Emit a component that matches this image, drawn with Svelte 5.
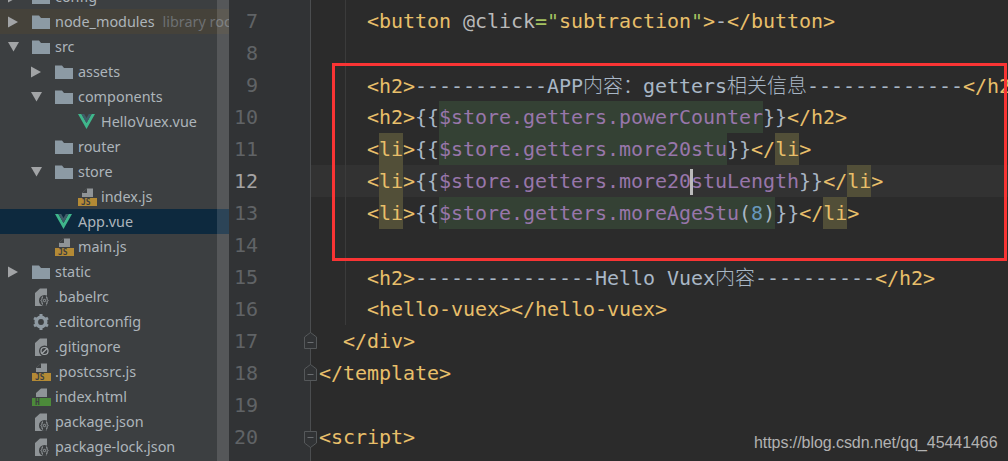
<script>
  const tree = [
    { name: 'config', d: 0, arrow: 'r', icon: 'folder' },
    { name: 'node_modules', note: 'library root', d: 0, arrow: 'r', icon: 'folder', cls: 'lib' },
    { name: 'src', d: 0, arrow: 'd', icon: 'folder' },
    { name: 'assets', d: 1, arrow: 'r', icon: 'folder' },
    { name: 'components', d: 1, arrow: 'd', icon: 'folder' },
    { name: 'HelloVuex.vue', d: 2, icon: 'vue' },
    { name: 'router', d: 1, icon: 'folder' },
    { name: 'store', d: 1, arrow: 'd', icon: 'folder' },
    { name: 'index.js', d: 2, icon: 'js' },
    { name: 'App.vue', d: 1, icon: 'vue', cls: 'sel' },
    { name: 'main.js', d: 1, icon: 'js' },
    { name: 'static', d: 0, arrow: 'r', icon: 'folder' },
    { name: '.babelrc', d: 0, icon: 'cfg' },
    { name: '.editorconfig', d: 0, icon: 'gear' },
    { name: '.gitignore', d: 0, icon: 'ign' },
    { name: '.postcssrc.js', d: 0, icon: 'js' },
    { name: 'index.html', d: 0, icon: 'html' },
    { name: 'package.json', d: 0, icon: 'cfg' },
    { name: 'package-lock.json', d: 0, icon: 'cfg' }
  ];

  const lines = [
    { n: 6, t: [] },
    { n: 7, t: [['t', '    <button '], ['a', '@click'], ['e', '="'], ['t', 'subtraction'], ['e', '"'], ['t', '>'], ['p', '-'], ['t', '</button>']] },
    { n: 8, t: [] },
    { n: 9, t: [['t', '    <h2>'], ['p', '-----------APP'], ['c', '内容：'], ['p', 'getters'], ['c', '相关信息'], ['p', '-------------'], ['t', '</h2>']] },
    { n: 10, t: [['t', '    <h2>'], ['p', '{{'], ['v g', '$store.getters.powerCounter'], ['p', '}}'], ['t', '</h2>']] },
    { n: 11, t: [['t', '    <'], ['t h', 'li'], ['t', '>'], ['p', '{{'], ['v g', '$store.getters.more20stu'], ['p', '}}'], ['t', '</'], ['t h', 'li'], ['t', '>']] },
    { n: 12, cur: true, t: [['t', '    <'], ['t h', 'li'], ['t', '>'], ['p', '{{'], ['v', '$store.getters.more20'], ['caret', ''], ['v', 'stuLength'], ['p', '}}'], ['t', '</'], ['t h', 'li'], ['t', '>']] },
    { n: 13, t: [['t', '    <'], ['t h', 'li'], ['t', '>'], ['p', '{{'], ['v g', '$store.getters.moreAgeStu'], ['p g', '('], ['n g', '8'], ['p g', ')'], ['p', '}}'], ['t', '</'], ['t h', 'li'], ['t', '>']] },
    { n: 14, t: [] },
    { n: 15, t: [['t', '    <h2>'], ['p', '---------------Hello Vuex'], ['c', '内容'], ['p', '----------'], ['t', '</h2>']] },
    { n: 16, t: [['t', '    <hello-vuex></hello-vuex>']] },
    { n: 17, fold: 'up', t: [['t', '  </div>']] },
    { n: 18, fold: 'up', t: [['t', '</template>']] },
    { n: 19, t: [] },
    { n: 20, fold: 'down', t: [['t', '<script>']] },
    { n: 21, t: [] }
  ];
</script>

<div class="app">
  <aside class="tree">
    {#each tree as r}
      <div class="row {r.cls ?? ''}">
        <span class="indent" style:width="{8 + 23 * r.d}px"></span>
        <span class="arrow">
          {#if r.arrow === 'r'}
            <svg width="11" height="12" viewBox="0 0 11 12"><path d="M0 0.5 10 6 0 11.5Z" fill="#a2a4a6" /></svg>
          {:else if r.arrow === 'd'}
            <svg width="11" height="10" viewBox="0 0 11 10"><path d="M0 0H11L5.500 9.500Z" fill="#a2a4a6" /></svg>
          {/if}
        </span>
        <span class="icon">
          {#if r.icon === 'folder'}
            <svg width="18" height="14" viewBox="0 0 18 14"><path d="M0 0.500H7L9 3H18V14H0Z" fill="#8c9aa4" /></svg>
          {:else if r.icon === 'vue'}
            <svg width="17" height="15" viewBox="0 0 17 15"><path d="M0 0H3.400L8.500 9 13.600 0H17L8.500 15Z" fill="#3fb68b" /><path d="M3.400 0H6.200L8.500 4 10.800 0H13.600L8.500 9Z" fill="#3f5c68" /></svg>
          {:else if r.icon === 'js'}
            <svg width="19" height="18" viewBox="0 0 19 18"><path d="M4 9V5L9 0.500H15V9Z" fill="#8f9497" /><path d="M4 5H9V0.500Z" fill="#3c3f41" /><rect y="10" width="19" height="8" fill="#b48a35" /><text x="3" y="17" class="badge">JS</text></svg>
          {:else if r.icon === 'html'}
            <svg width="19" height="18" viewBox="0 0 19 18"><path d="M4 9V5L9 0.500H15V9Z" fill="#8f9497" /><rect y="10" width="19" height="8" fill="#4c8a3a" /><text x="3" y="17" class="badge">H</text></svg>
          {:else if r.icon === 'cfg'}
            <svg width="18" height="18" viewBox="0 0 18 18"><path d="M3 18V5L8 0.500H15V18Z" fill="#8f9497" /><circle cx="12.500" cy="12.500" r="5.500" fill="#3c3f41" /><path d="M11 8.500C9.500 8.500 10.500 12 9 12.500 10.500 13 9.500 16.500 11 16.500M14 8.500C15.500 8.500 14.500 12 16 12.500 14.500 13 15.500 16.500 14 16.500" fill="none" stroke="#a3a8ab" /><circle cx="12.500" cy="12.500" r="1.200" fill="none" stroke="#a3a8ab" stroke-width="0.800" /></svg>
          {:else if r.icon === 'ign'}
            <svg width="18" height="18" viewBox="0 0 18 18"><path d="M3 18V5L8 0.500H15V18Z" fill="#8f9497" /><circle cx="12.500" cy="13" r="5.500" fill="#3c3f41" /><circle cx="12.500" cy="13" r="3.500" fill="none" stroke="#a3a8ab" stroke-width="1.200" /><path d="M10 15.500 15 10.500" stroke="#a3a8ab" stroke-width="1.200" /></svg>
          {:else if r.icon === 'gear'}
            <svg width="18" height="18" viewBox="0 0 18 18"><circle cx="9" cy="9" r="4.800" fill="none" stroke="#8f9aa2" stroke-width="3.400" /><path d="M9 1V17M2 5 16 13M2 13 16 5" stroke="#8f9aa2" stroke-width="3" /><circle cx="9" cy="9" r="2.900" fill="#3c3f41" /></svg>
          {/if}
        </span>
        <span class="name">{r.name}</span>
        {#if r.note}<span class="note">{r.note}</span>{/if}
      </div>
    {/each}
    <div class="scrollbar"></div>
  </aside>

  <main class="main">
    <div class="guide"></div>
    {#each lines as l, i}
      <div class="line" class:first={i === 0}>
        <div class="num" class:curnum={l.cur}>
          {l.n}
          {#if l.fold === 'up'}
            <svg class="fold up" width="13" height="17" viewBox="0 0 13 17"><path d="M0.500 5 6.500 0.500 12.500 5V16.500H0.500Z" fill="#313335" stroke="#55585a" /><path d="M3.500 10.500H9.500" stroke="#6a6d70" /></svg>
          {:else if l.fold === 'down'}
            <svg class="fold down" width="13" height="17" viewBox="0 0 13 17"><path d="M0.500 0.500H12.500V12L6.500 16.500 0.500 12Z" fill="#313335" stroke="#55585a" /><path d="M3.500 6.500H9.500" stroke="#6a6d70" /></svg>
          {/if}
        </div>
        <div class="code" class:cur={l.cur}>{#each l.t as [c, s]}<span class={c}>{s}</span>{/each}</div>
      </div>
    {/each}
    <div class="redbox"></div>
  </main>

  <div class="mark">https://blog.csdn.net/qq_45441466</div>
</div>

<style>
  :global(body) {
    margin: 0;
    background: #2b2b2b;
  }
  .app {
    position: relative;
    display: grid;
    grid-template-columns: 229px 1fr;
    width: 1008px;
    height: 461px;
    overflow: hidden;
  }
  .tree {
    position: relative;
    height: 461px;
    overflow: hidden;
    background: #3c3f41;
    font-family: "Noto Sans", sans-serif;
    font-size: 14.4px;
    color: #adb5bb;
  }
  .row {
    display: flex;
    align-items: center;
    height: 25px;
    white-space: nowrap;
  }
  .row:first-child {
    margin-top: -16px;
  }
  .lib {
    background: #45423a;
  }
  .sel {
    background: #0d293e;
  }
  .indent {
    flex: none;
  }
  .arrow {
    flex: none;
    display: flex;
    align-items: center;
    width: 24px;
  }
  .icon {
    flex: none;
    display: flex;
    align-items: center;
    width: 23px;
  }
  .name {
    flex: none;
  }
  .note {
    margin-left: 8px;
    color: #6d7072;
  }
  .badge {
    font: bold 8px "DejaVu Sans Mono", monospace;
    fill: #3c3f41;
  }
  .scrollbar {
    position: absolute;
    top: 0;
    right: 0;
    bottom: 0;
    width: 12px;
    background: rgba(255, 255, 255, 0.13);
  }
  .main {
    position: relative;
    height: 461px;
    overflow: hidden;
    font-family: "DejaVu Sans Mono", monospace;
    font-size: 20px;
    letter-spacing: -0.04px;
    line-height: 32px;
  }
  .line {
    display: flex;
    height: 32px;
  }
  .first {
    margin-top: -27px;
  }
  .num {
    position: relative;
    flex: none;
    box-sizing: border-box;
    width: 82px;
    padding-right: 52px;
    border-right: 1px solid #4b4d4f;
    background: #313335;
    text-align: right;
    color: #606366;
  }
  .curnum {
    color: #a4a3a3;
  }
  .fold {
    position: absolute;
    left: 75px;
  }
  .fold.up {
    top: 7px;
  }
  .fold.down {
    top: 10px;
  }
  .code {
    flex: 1;
    min-width: 0;
    box-sizing: border-box;
    height: 32px;
    padding-left: 8px;
    overflow: hidden;
    white-space: pre;
  }
  .cur {
    background: #323232;
  }
  .t {
    color: #e8bf6a;
  }
  .p {
    color: #a9b7c6;
  }
  .a {
    color: #bababa;
  }
  .e {
    color: #a5c261;
  }
  .v {
    color: #9876aa;
  }
  .n {
    color: #6897bb;
  }
  .c {
    color: #a9b7c6;
    font-family: "Noto Sans CJK SC", sans-serif;
    font-weight: 300;
    letter-spacing: 0;
  }
  .g {
    display: inline-block;
    background: #344134;
  }
  .h {
    display: inline-block;
    background: #524f38;
  }
  .caret {
    position: relative;
    display: inline-block;
    width: 0;
    height: 0;
  }
  .caret::before {
    content: "";
    position: absolute;
    left: -1px;
    bottom: -7px;
    width: 3px;
    height: 26px;
    background: #bbbbbb;
  }
  .guide {
    position: absolute;
    left: 116px;
    top: 0;
    width: 1px;
    height: 325px;
    background: #3b3b3b;
  }
  .redbox {
    position: absolute;
    left: 103px;
    top: 63px;
    box-sizing: border-box;
    width: 675px;
    height: 198px;
    border: 3px solid #f93434;
  }
  .mark {
    position: absolute;
    left: 754px;
    top: 433px;
    font-family: "Liberation Sans", sans-serif;
    font-size: 16px;
    letter-spacing: -0.06px;
    line-height: 20px;
    color: #b2b2b2;
  }
</style>
